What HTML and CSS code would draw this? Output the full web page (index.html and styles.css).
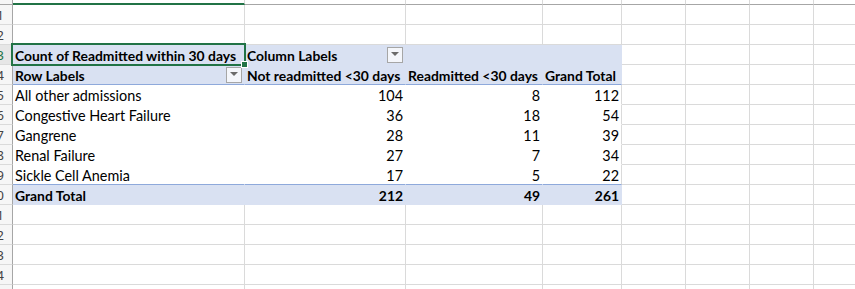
FILE: index.html
```html
<!DOCTYPE html>
<html lang="en">
    <head>
        <meta charset="UTF-8">
        <title>Readmissions Pivot</title>
        <link rel="stylesheet" href="styles.css">
    </head>
    <body>
        <div class="sheet">
            <div class="row colhead">
                <div class="hd"></div>
                <div class="c active-col"></div><div class="c"></div><div class="c"></div><div class="c"></div>
                <div class="c"></div><div class="c"></div><div class="c"></div><div class="c"></div>
            </div>
            <div class="row">
                <div class="hd"><span>1</span></div>
                <div class="c"></div><div class="c"></div><div class="c"></div><div class="c"></div>
                <div class="c"></div><div class="c"></div><div class="c"></div><div class="c"></div>
            </div>
            <div class="row">
                <div class="hd"><span>2</span></div>
                <div class="c"></div><div class="c"></div><div class="c"></div><div class="c"></div>
                <div class="c"></div><div class="c"></div><div class="c"></div><div class="c"></div>
            </div>
            <div class="row">
                <div class="hd active-row"><span>3</span></div>
                <div class="c pv-head">Count of Readmitted within 30 days</div>
                <div class="c pv-head"><span class="label">Column Labels</span><span class="drop"></span></div>
                <div class="c pv-head"></div>
                <div class="c pv-head last"></div>
                <div class="c"></div><div class="c"></div><div class="c"></div><div class="c"></div>
            </div>
            <div class="row">
                <div class="hd"><span>4</span></div>
                <div class="c pv-head sep"><span class="label">Row Labels</span><span class="drop"></span></div>
                <div class="c pv-head sep">Not readmitted &lt;30 days</div>
                <div class="c pv-head sep">Readmitted &lt;30 days</div>
                <div class="c pv-head sep last">Grand Total</div>
                <div class="c"></div><div class="c"></div><div class="c"></div><div class="c"></div>
            </div>
            <div class="row">
                <div class="hd"><span>5</span></div>
                <div class="c pv-body">All other admissions</div>
                <div class="c pv-body num">104</div>
                <div class="c pv-body num">8</div>
                <div class="c pv-body num last">112</div>
                <div class="c"></div><div class="c"></div><div class="c"></div><div class="c"></div>
            </div>
            <div class="row">
                <div class="hd"><span>6</span></div>
                <div class="c pv-body">Congestive Heart Failure</div>
                <div class="c pv-body num">36</div>
                <div class="c pv-body num">18</div>
                <div class="c pv-body num last">54</div>
                <div class="c"></div><div class="c"></div><div class="c"></div><div class="c"></div>
            </div>
            <div class="row">
                <div class="hd"><span>7</span></div>
                <div class="c pv-body">Gangrene</div>
                <div class="c pv-body num">28</div>
                <div class="c pv-body num">11</div>
                <div class="c pv-body num last">39</div>
                <div class="c"></div><div class="c"></div><div class="c"></div><div class="c"></div>
            </div>
            <div class="row">
                <div class="hd"><span>8</span></div>
                <div class="c pv-body">Renal Failure</div>
                <div class="c pv-body num">27</div>
                <div class="c pv-body num">7</div>
                <div class="c pv-body num last">34</div>
                <div class="c"></div><div class="c"></div><div class="c"></div><div class="c"></div>
            </div>
            <div class="row">
                <div class="hd"><span>9</span></div>
                <div class="c pv-body sep">Sickle Cell Anemia</div>
                <div class="c pv-body sep num">17</div>
                <div class="c pv-body sep num">5</div>
                <div class="c pv-body sep num last">22</div>
                <div class="c"></div><div class="c"></div><div class="c"></div><div class="c"></div>
            </div>
            <div class="row">
                <div class="hd"><span>10</span></div>
                <div class="c pv-total">Grand Total</div>
                <div class="c pv-total num">212</div>
                <div class="c pv-total num">49</div>
                <div class="c pv-total num last">261</div>
                <div class="c"></div><div class="c"></div><div class="c"></div><div class="c"></div>
            </div>
            <div class="row">
                <div class="hd"><span>11</span></div>
                <div class="c"></div><div class="c"></div><div class="c"></div><div class="c"></div>
                <div class="c"></div><div class="c"></div><div class="c"></div><div class="c"></div>
            </div>
            <div class="row">
                <div class="hd"><span>12</span></div>
                <div class="c"></div><div class="c"></div><div class="c"></div><div class="c"></div>
                <div class="c"></div><div class="c"></div><div class="c"></div><div class="c"></div>
            </div>
            <div class="row">
                <div class="hd"><span>13</span></div>
                <div class="c"></div><div class="c"></div><div class="c"></div><div class="c"></div>
                <div class="c"></div><div class="c"></div><div class="c"></div><div class="c"></div>
            </div>
            <div class="row">
                <div class="hd"><span>14</span></div>
                <div class="c"></div><div class="c"></div><div class="c"></div><div class="c"></div>
                <div class="c"></div><div class="c"></div><div class="c"></div><div class="c"></div>
            </div>
            <div class="row">
                <div class="hd"><span>15</span></div>
                <div class="c"></div><div class="c"></div><div class="c"></div><div class="c"></div>
                <div class="c"></div><div class="c"></div><div class="c"></div><div class="c"></div>
            </div>
            <!-- active cell A3 -->
            <div class="selection"><span class="handle"></span></div>
        </div>
    </body>
</html>
```

FILE: styles.css
```css
body {
    margin: 0;
    background: #fff;
    overflow: hidden;
}

.sheet {
    position: relative;
    display: flex;
    flex-direction: column;
    width: 855px;
    height: 289px;
    overflow: hidden;
    font-family: Lato, "Open Sans", sans-serif;
    font-size: 14.4px;
    color: #000;
}

.row {
    display: grid;
    grid-template-columns: 13px 232px 161px 137px 79px 64px 64px 64px 64px;
    height: 20px;
    flex: none;
}

.row > div {
    box-sizing: border-box;
    border-right: 1px solid #dadada;
    border-bottom: 1px solid #dadada;
}

/* column header strip, only its lower edge shows */
.colhead {
    height: 5px;
}

.colhead > div {
    border-bottom-color: #a6a6a6;
}

.colhead .active-col {
    border-bottom: 2px solid #217346;
}

.hd {
    display: flex;
    justify-content: flex-end;
    align-items: center;
    overflow: hidden;
    background: #f6f6f6;
    border-right-color: #a6a6a6 !important;
    font-family: "Noto Sans", sans-serif;
    font-size: 13px;
    color: #444;
}

.hd span {
    flex: none;
    margin-right: 8px;
}

.hd.active-row {
    background: #e6e6e6;
    color: #217346;
}

.c {
    display: flex;
    align-items: flex-end;
    padding: 0 2px;
    line-height: 16px;
    white-space: nowrap;
}

.num {
    justify-content: flex-end;
}

.label {
    flex: 1;
}

/* pivot table */
.pv-head {
    background: #d9e1f2;
    font-weight: bold;
    font-size: 13.9px;
    border-color: #d9e1f2 !important;
}

.pv-body {
    background: #fff;
    border-color: #fff !important;
}

.pv-total {
    background: #d9e1f2;
    font-weight: bold;
    font-size: 13.9px;
    border-color: #d9e1f2 !important;
}

.pv-body.last {
    border-right-color: #dadada !important;
}

.pv-head.sep,
.pv-body.sep {
    border-bottom-color: #8ea9db !important;
}

.drop {
    align-self: center;
    display: flex;
    align-items: center;
    justify-content: center;
    width: 16px;
    height: 16px;
    box-sizing: border-box;
    border: 1px solid #a6a6a6;
    background: #f4f6fb;
}

.drop::after {
    content: "";
    margin-top: -1px;
    border-left: 4px solid transparent;
    border-right: 4px solid transparent;
    border-top: 4px solid #6b6b6b;
}

.selection {
    position: absolute;
    left: 11px;
    top: 43px;
    width: 235px;
    height: 23px;
    box-sizing: border-box;
    border: 2px solid #217346;
}

.handle {
    position: absolute;
    right: -4px;
    bottom: -4px;
    width: 5px;
    height: 5px;
    background: #217346;
    border: 1px solid #fff;
}
```
